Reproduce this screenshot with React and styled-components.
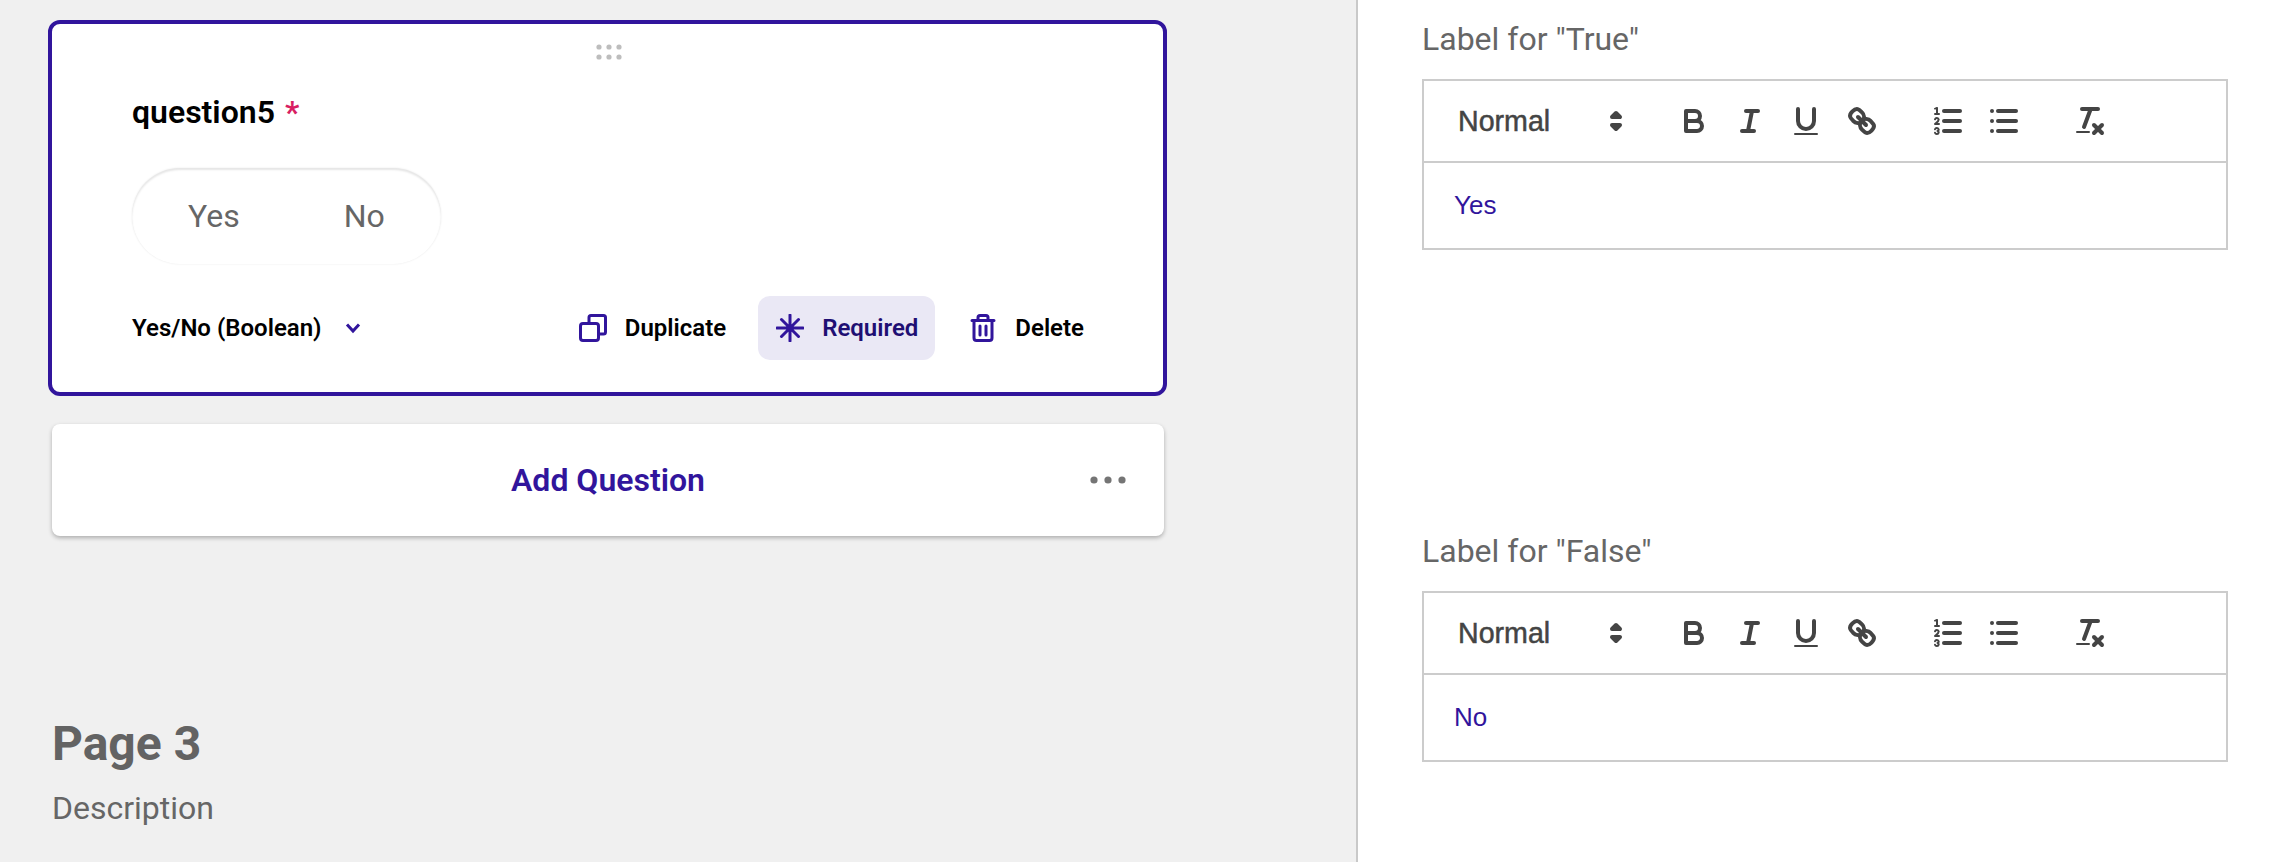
import React from "react"
import styled, { createGlobalStyle } from "styled-components"

const PRIMARY = "#31159c"
const INK = "#444"

const Global = createGlobalStyle`
  html, body {
    margin: 0;
    padding: 0;
    height: 100%;
    overflow: hidden;
    background: #fff;
  }
  * {
    box-sizing: border-box;
  }
`

const Root = styled.div`
  display: flex;
  width: 2276px;
  height: 862px;
  overflow: hidden;
  font-family: Roboto, sans-serif;
`

const Designer = styled.div`
  flex: none;
  width: 1358px;
  height: 100%;
  padding: 20px 0 0 48px;
  background: #f0f0f0;
  border-right: 2px solid #c9c9c9;
`

const QuestionCard = styled.div`
  position: relative;
  width: 1119px;
  height: 376px;
  padding: 68px 61px 0 80px;
  background: #fff;
  border: 4px solid ${PRIMARY};
  border-radius: 12px;
`

const DragHandle = styled.svg`
  position: absolute;
  top: 20px;
  left: 544px;
  width: 26px;
  height: 16px;
  fill: #bdbdbd;
`

const Title = styled.div`
  font-size: 32px;
  line-height: 40px;
  font-weight: 600;
  color: #000;
`

const Star = styled.span`
  margin-left: 10px;
  color: #d81f63;
`

const Toggle = styled.div`
  display: flex;
  align-items: center;
  width: 309px;
  height: 96px;
  margin-top: 36px;
  padding-left: 56px;
  gap: 104px;
  border-radius: 48px;
  background: #fff;
  box-shadow: inset 0 2px 2px rgba(0, 0, 0, 0.1), 0 0 2px rgba(0, 0, 0, 0.1);
  font-size: 32px;
  color: #666;
`

const Footer = styled.div`
  display: flex;
  align-items: center;
  justify-content: space-between;
  height: 64px;
  margin-top: 32px;
`

const TypePicker = styled.div`
  display: flex;
  align-items: center;
  gap: 23px;
  font-size: 24px;
  font-weight: 600;
  color: #000;
`

const Actions = styled.div`
  display: flex;
  align-items: center;
  gap: 14px;
`

const Action = styled.div`
  display: flex;
  align-items: center;
  gap: 18px;
  height: 64px;
  padding: 0 ${p => (p.$active ? "17px" : "18px")} 0 18px;
  margin-right: ${p => (p.$active ? "2px" : "0")};
  border-radius: 12px;
  font-size: 24px;
  font-weight: 600;
  color: ${p => (p.$active ? "#1f0f73" : "#000")};
  background: ${p => (p.$active ? "#eae8f5" : "transparent")};
`

const ActionIcon = styled.svg`
  flex: none;
  width: 28px;
  height: 28px;
  fill: none;
  stroke: ${PRIMARY};
  stroke-width: 3;
  stroke-linecap: round;
  stroke-linejoin: round;
`

const Chevron = styled.svg`
  width: 16px;
  height: 14px;
  fill: none;
  stroke: ${PRIMARY};
  stroke-width: 3;
`

const AddCard = styled.div`
  position: relative;
  display: flex;
  align-items: center;
  justify-content: center;
  width: 1112px;
  height: 112px;
  margin: 28px 0 0 4px;
  background: #fff;
  border-radius: 8px;
  box-shadow: 0 2px 4px rgba(0, 0, 0, 0.28);
  font-size: 32px;
  font-weight: 600;
  color: ${PRIMARY};
`

const MoreDots = styled.svg`
  position: absolute;
  right: 38px;
  top: 52px;
  width: 36px;
  height: 8px;
  fill: #757575;
`

const PageTitle = styled.h2`
  margin: 180px 0 0 4px;
  font-size: 48px;
  line-height: 56px;
  font-weight: 700;
  color: #636363;
`

const PageDescription = styled.div`
  margin: 16px 0 0 4px;
  font-size: 32px;
  line-height: 40px;
  color: #666;
`

const Properties = styled.div`
  flex: 1;
  padding: 19px 48px 0 64px;
  background: #fff;
`

const FieldLabel = styled.div`
  font-size: 32px;
  line-height: 40px;
  color: #666;
`

const Field = styled.div`
  height: 512px;
`

const Editor = styled.div`
  width: 806px;
  margin-top: 20px;
  border: 2px solid #ccc;
`

const Toolbar = styled.div`
  display: flex;
  align-items: center;
  height: 82px;
  padding-left: 19px;
  border-bottom: 2px solid #ccc;
`

const Picker = styled.div`
  display: flex;
  align-items: center;
  justify-content: space-between;
  width: 196px;
  margin-right: 27px;
  padding-left: 15px;
  font-family: "Liberation Sans", sans-serif;
  font-size: 28.6px;
  color: ${INK};
  -webkit-text-stroke: 0.5px ${INK};
`

const ToolGroup = styled.div`
  display: flex;
  margin-right: 30px;
`

const Tool = styled.svg`
  display: block;
  flex: none;
  width: 56px;
  height: 36px;
  padding: 0 10px;
  fill: none;
  stroke: ${INK};
  stroke-width: 2;
  stroke-linecap: round;
  stroke-linejoin: round;

  .fill {
    fill: ${INK};
    stroke: none;
  }
  .thin {
    stroke-width: 1;
  }
`

const PickerArrows = styled.svg`
  width: 36px;
  height: 36px;
  margin-right: 5px;
  fill: ${INK};
  stroke: ${INK};
  stroke-width: 2;
  stroke-linejoin: round;
`

const EditorBody = styled.div`
  height: 85px;
  padding: 27px 0 0 30px;
  font-family: "Liberation Sans", sans-serif;
  font-size: 26px;
  line-height: 30px;
  color: ${PRIMARY};
`

const dragDots = [3, 13, 23].flatMap(x => [3, 13].map(y => [x, y]))

const RichEditor = ({ value }) => (
  <Editor>
    <Toolbar>
      <Picker>
        Normal
        <PickerArrows viewBox="0 0 18 18">
          <polygon points="7 11 9 13 11 11 7 11" />
          <polygon points="7 7 9 5 11 7 7 7" />
        </PickerArrows>
      </Picker>
      <ToolGroup>
        <Tool viewBox="0 0 18 18">
          <path d="M5,4H9.5A2.5,2.5,0,0,1,12,6.5v0A2.5,2.5,0,0,1,9.5,9H5A0,0,0,0,1,5,9V4A0,0,0,0,1,5,4Z" />
          <path d="M5,9h5.5A2.5,2.5,0,0,1,13,11.5v0A2.5,2.5,0,0,1,10.5,14H5a0,0,0,0,1,0,0V9A0,0,0,0,1,5,9Z" />
        </Tool>
        <Tool viewBox="0 0 18 18">
          <line x1="7" x2="13" y1="4" y2="4" />
          <line x1="5" x2="11" y1="14" y2="14" />
          <line x1="8" x2="10" y1="14" y2="4" />
        </Tool>
        <Tool viewBox="0 0 18 18">
          <path d="M5,3V9a4.012,4.012,0,0,0,4,4H9a4.012,4.012,0,0,0,4-4V3" />
          <rect className="fill" height="1" rx="0.5" ry="0.5" width="12" x="3" y="15" />
        </Tool>
        <Tool viewBox="0 0 18 18">
          <line x1="7" x2="11" y1="7" y2="11" />
          <path d="M8.9,4.577a3.476,3.476,0,0,1,.36,4.679A3.476,3.476,0,0,1,4.577,8.9C3.185,7.5,2.035,6.4,4.217,4.217S7.5,3.185,8.9,4.577Z" />
          <path d="M13.423,9.1a3.476,3.476,0,0,0-4.679-.36,3.476,3.476,0,0,0,.36,4.679c1.392,1.392,2.5,2.542,4.679.36S14.815,10.5,13.423,9.1Z" />
        </Tool>
      </ToolGroup>
      <ToolGroup>
        <Tool viewBox="0 0 18 18">
          <line x1="7" x2="15" y1="4" y2="4" />
          <line x1="7" x2="15" y1="9" y2="9" />
          <line x1="7" x2="15" y1="14" y2="14" />
          <line className="thin" x1="2.5" x2="4.5" y1="5.5" y2="5.5" />
          <path className="fill" d="M3.5,6A0.5,0.5,0,0,1,3,5.5V3.085l-0.276.138A0.5,0.5,0,0,1,2.053,3c-0.124-.247-0.023-0.324.224-0.447l1-.5A0.5,0.5,0,0,1,4,2.5v3A0.5,0.5,0,0,1,3.5,6Z" />
          <path className="thin" d="M4.5,10.5h-2c0-.234,1.85-1.076,1.85-2.234A0.959,0.959,0,0,0,2.5,8.156" />
          <path className="thin" d="M2.5,14.846a0.959,0.959,0,0,0,1.85-.109A0.7,0.7,0,0,0,3.75,14a0.688,0.688,0,0,0,.6-0.736,0.959,0.959,0,0,0-1.85-.109" />
        </Tool>
        <Tool viewBox="0 0 18 18">
          <line x1="6" x2="15" y1="4" y2="4" />
          <line x1="6" x2="15" y1="9" y2="9" />
          <line x1="6" x2="15" y1="14" y2="14" />
          <line x1="3" x2="3" y1="4" y2="4" />
          <line x1="3" x2="3" y1="9" y2="9" />
          <line x1="3" x2="3" y1="14" y2="14" />
        </Tool>
      </ToolGroup>
      <ToolGroup>
        <Tool viewBox="0 0 18 18">
          <line x1="5" x2="13" y1="3" y2="3" />
          <line x1="6" x2="9.35" y1="12" y2="3" transform="translate(0 0)" />
          <line x1="11" x2="15" y1="11" y2="15" />
          <line x1="15" x2="11" y1="11" y2="15" />
          <rect className="fill" height="1" rx="0.5" ry="0.5" width="7" x="2" y="14" />
        </Tool>
      </ToolGroup>
    </Toolbar>
    <EditorBody>{value}</EditorBody>
  </Editor>
)

export default function App() {
  return (
    <Root>
      <Global />
      <Designer>
        <QuestionCard>
          <DragHandle viewBox="0 0 26 16">
            {dragDots.map(([x, y]) => (
              <circle key={`${x}-${y}`} cx={x} cy={y} r="2.6" />
            ))}
          </DragHandle>
          <Title>
            question5<Star>*</Star>
          </Title>
          <Toggle>
            <span>Yes</span>
            <span>No</span>
          </Toggle>
          <Footer>
            <TypePicker>
              Yes/No (Boolean)
              <Chevron viewBox="0 0 16 14">
                <path d="M2 3.5 L8 10 L14 3.5" />
              </Chevron>
            </TypePicker>
            <Actions>
              <Action>
                <ActionIcon viewBox="0 0 28 28">
                  <rect x="1.5" y="9.5" width="18" height="17" rx="2.5" />
                  <path d="M10 9.5V3.5A2 2 0 0 1 12 1.5H24.5A2 2 0 0 1 26.5 3.5V18A2 2 0 0 1 24.5 20H19.5" />
                </ActionIcon>
                Duplicate
              </Action>
              <Action $active>
                <ActionIcon viewBox="0 0 28 28">
                  <path d="M14 1V27M1 14H27M5.5 5.5L22.5 22.5M22.5 5.5L5.5 22.5" />
                  <circle cx="14" cy="14" r="3.5" fill={PRIMARY} stroke="none" />
                </ActionIcon>
                Required
              </Action>
              <Action>
                <ActionIcon viewBox="0 0 28 28">
                  <path d="M3 6.5H25M9 6.5V3.5A2 2 0 0 1 11 1.5H17A2 2 0 0 1 19 3.5V6.5" />
                  <path d="M5 6.5V24A2.5 2.5 0 0 0 7.5 26.5H20.5A2.5 2.5 0 0 0 23 24V6.5" />
                  <path d="M11 12V21M17 12V21" />
                </ActionIcon>
                Delete
              </Action>
            </Actions>
          </Footer>
        </QuestionCard>
        <AddCard>
          Add Question
          <MoreDots viewBox="0 0 36 8">
            <circle cx="4" cy="4" r="3.6" />
            <circle cx="18" cy="4" r="3.6" />
            <circle cx="32" cy="4" r="3.6" />
          </MoreDots>
        </AddCard>
        <PageTitle>Page 3</PageTitle>
        <PageDescription>Description</PageDescription>
      </Designer>
      <Properties>
        <Field>
          <FieldLabel>Label for "True"</FieldLabel>
          <RichEditor value="Yes" />
        </Field>
        <Field>
          <FieldLabel>Label for "False"</FieldLabel>
          <RichEditor value="No" />
        </Field>
      </Properties>
    </Root>
  )
}
